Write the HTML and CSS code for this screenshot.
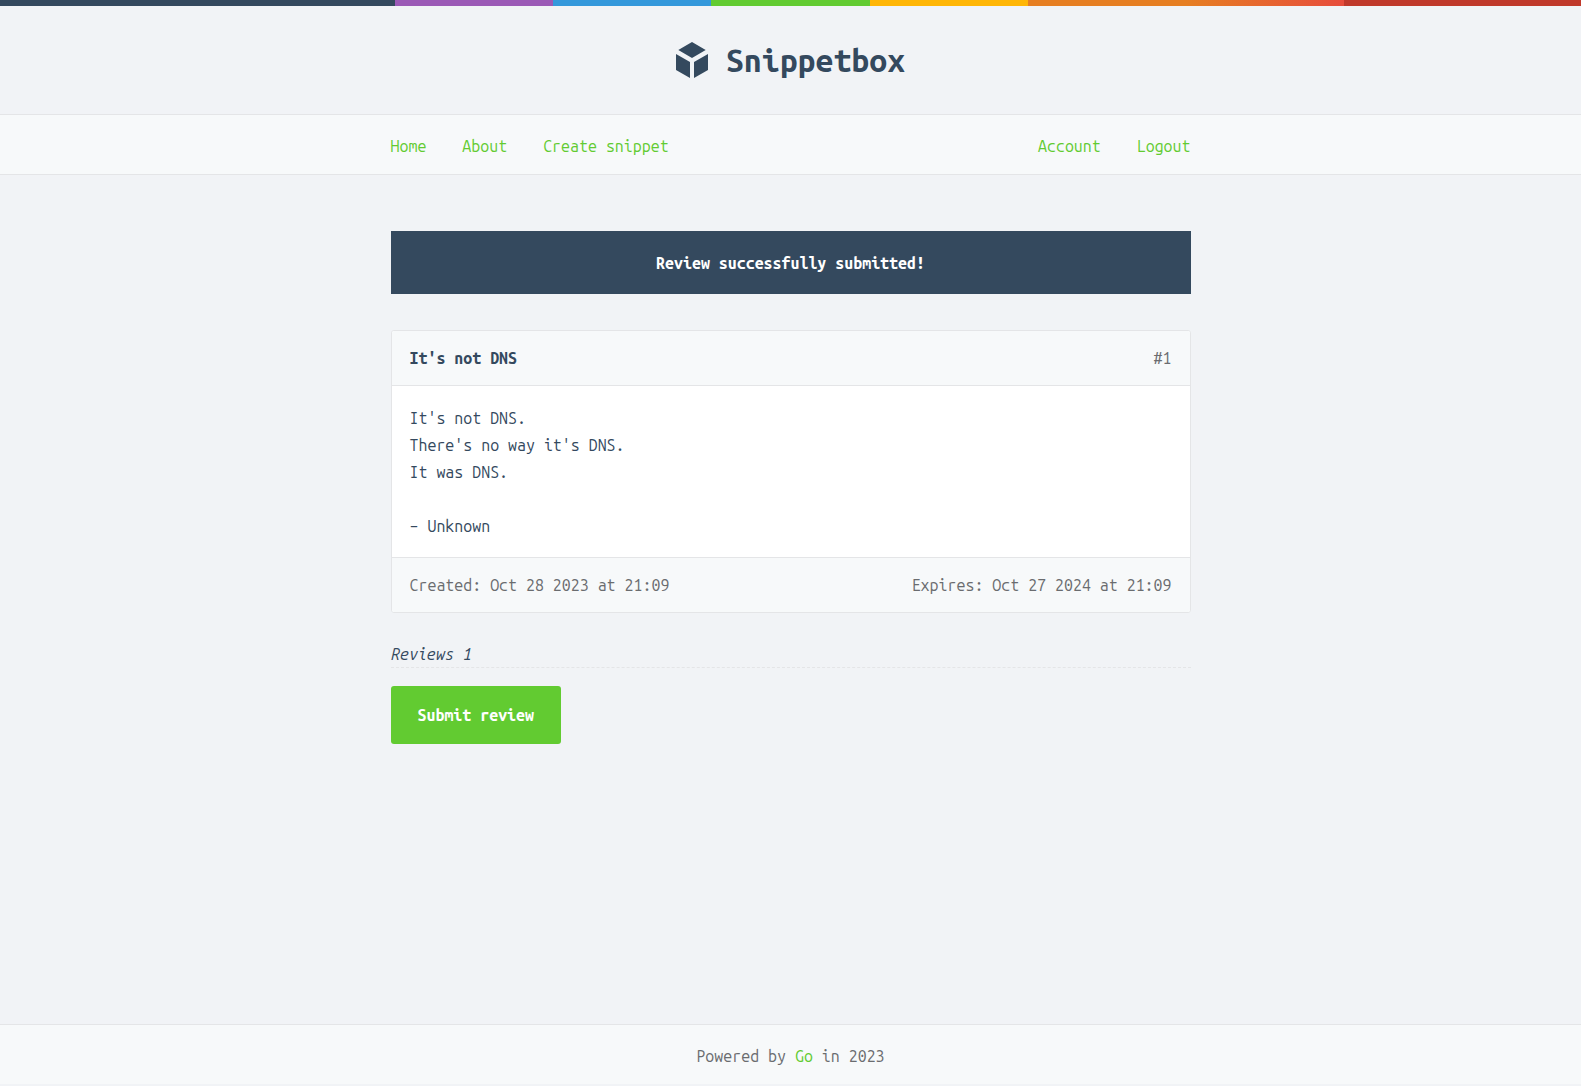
FILE: index.html
```html
<!DOCTYPE html>
<html lang="en">
<head>
  <meta charset="utf-8">
  <meta name="viewport" content="width=device-width, initial-scale=1">
  <title>Snippet #1 - Snippetbox</title>
  <link rel="stylesheet" href="styles.css">
</head>
<body>
  <header class="header">
    <h1 class="brand">
      <a class="brand-link" href="/">
        <svg class="brand-logo" viewBox="0 0 32 36" aria-hidden="true">
          <path d="M16 0 29.700 8 16 16 2.300 8ZM0 12 14 20V36L0 28ZM32 12 18 20V36L32 28Z"/>
        </svg>
        <span>Snippetbox</span>
      </a>
    </h1>
  </header>
  <nav class="nav">
    <div class="container nav-row">
      <div class="nav-group">
        <a href="/">Home</a>
        <a href="/about">About</a>
        <a href="/snippet/create">Create snippet</a>
      </div>
      <div class="nav-group">
        <a href="/account/view">Account</a>
        <button class="nav-button" type="button">Logout</button>
      </div>
    </div>
  </nav>
  <main class="container main">
    <div class="flash" role="status">Review successfully submitted!</div>
    <article class="snippet">
      <div class="metadata">
        <strong class="snippet-title">It's not DNS</strong>
        <span>#1</span>
      </div>
      <pre class="snippet-body"><code>It's not DNS.
There's no way it's DNS.
It was DNS.

– Unknown</code></pre>
      <div class="metadata">
        <time datetime="2023-10-28T21:09">Created: Oct 28 2023 at 21:09</time>
        <time datetime="2024-10-27T21:09">Expires: Oct 27 2024 at 21:09</time>
      </div>
    </article>
    <h2 class="reviews">Reviews 1</h2>
    <button class="button" type="button">Submit review</button>
  </main>
  <footer class="footer">Powered by <a href="https://golang.org/">Go</a> in 2023</footer>
</body>
</html>
```

FILE: styles.css
```css
* {
  box-sizing: border-box;
  margin: 0;
  padding: 0;
}

body {
  display: flex;
  flex-direction: column;
  min-height: 100vh;
  padding-bottom: 2px;
  background: #f1f3f6;
  color: #34495e;
  font-family: "Ubuntu Mono", "DejaVu Sans Mono", monospace;
  font-size: 16px;
  line-height: 27px;
}

a {
  color: #62cb31;
  text-decoration: none;
}

button,
pre,
code {
  font: inherit;
}

button {
  border: 0;
  cursor: pointer;
}

.container {
  width: 100%;
  max-width: 800px;
  margin-inline: auto;
}

.header {
  padding: 42px 0 36px;
  background-image: linear-gradient(
    to right,
    #34495e 25%,
    #9b59b6 25% 35%,
    #3498db 35% 45%,
    #62cb31 45% 55%,
    #ffb606 55% 65%,
    #e67e22 65% 75%,
    #e74c3c 85%,
    #c0392b 85%
  );
  background-repeat: no-repeat;
  background-size: 100% 6px;
}

.brand {
  display: flex;
  justify-content: center;
  font-size: 32px;
  line-height: 36px;
}

.brand-link {
  display: flex;
  gap: 18px;
  color: #34495e;
}

.brand-logo {
  width: 32px;
  height: 36px;
  fill: currentColor;
}

.nav {
  padding: 18px 0 14px;
  background: #f7f9fa;
  border-top: 1px solid #e4e5e7;
  border-bottom: 1px solid #e4e5e7;
}

.nav-row,
.nav-group,
.metadata {
  display: flex;
  flex-wrap: wrap;
  justify-content: space-between;
}

.nav-group {
  column-gap: 36px;
}

.nav-button {
  background: none;
  color: #62cb31;
}

.main {
  flex: 1;
  padding: 56px 0 54px;
}

.flash {
  margin-bottom: 36px;
  padding: 19px 18px 17px;
  background: #34495e;
  color: #fff;
  font-weight: bold;
  text-align: center;
}

.snippet {
  overflow: hidden;
  margin-bottom: 28px;
  background: #fff;
  border: 1px solid #e4e5e7;
  border-radius: 3px;
}

.metadata {
  padding: 14px 18px 13px;
  background: #f7f9fa;
  color: #6a6c6f;
}

.snippet-title {
  color: #34495e;
}

.snippet-body {
  overflow: auto;
  padding: 19px 18px 17px;
  border-top: 1px solid #e4e5e7;
  border-bottom: 1px solid #e4e5e7;
}

.reviews {
  margin-bottom: 18px;
  border-bottom: 1px dashed #e4e5e7;
  font-size: 16px;
  font-style: italic;
  font-weight: normal;
  line-height: 26px;
}

.button {
  padding: 16px 27px 15px;
  background: #62cb31;
  border-radius: 3px;
  color: #fff;
  font-weight: bold;
}

.footer {
  padding: 18px 0 14px;
  background: #f7f9fa;
  border-top: 1px solid #e4e5e7;
  color: #6a6c6f;
  text-align: center;
}
```
